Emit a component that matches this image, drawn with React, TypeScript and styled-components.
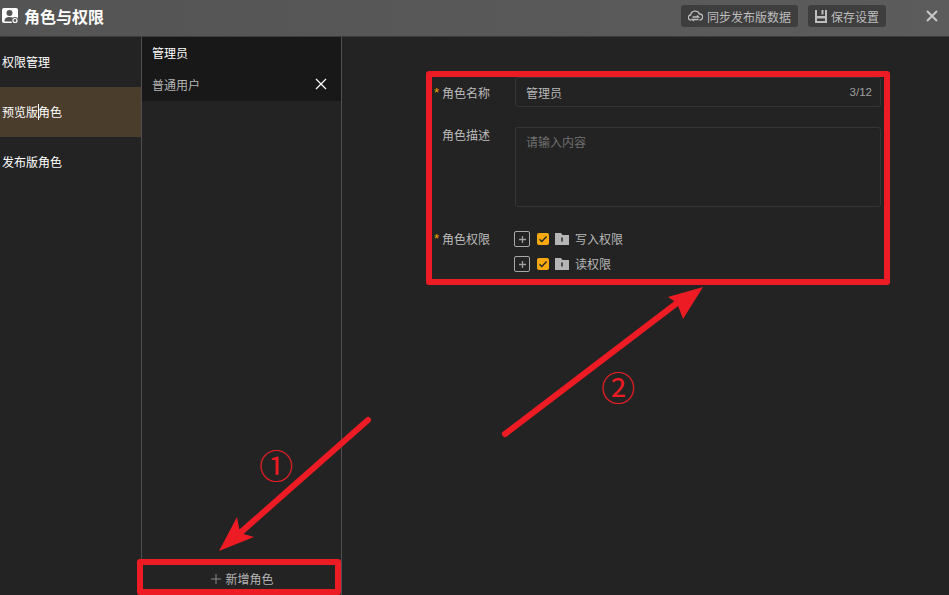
import React from "react";
import styled, { createGlobalStyle } from "styled-components";

const Global = createGlobalStyle`
  html, body { margin: 0; padding: 0; background: #232323; }
  * { box-sizing: border-box; }
`;

const Page = styled.div`
  position: relative;
  width: 949px;
  height: 595px;
  overflow: hidden;
  display: flex;
  flex-direction: column;
  background: #232323;
  color: #fff;
  font-family: "Noto Sans CJK SC", "Liberation Sans", sans-serif;
  font-size: 12px;
`;

const Header = styled.header`
  height: 37px;
  flex: none;
  display: flex;
  align-items: center;
  padding: 0 11px 4px 2px;
  background: linear-gradient(90deg, #545454, #5c5c5c);
  border-bottom: 1px solid #3c3c3c;
`;

const Title = styled.h1`
  margin: 0 0 0 5px;
  flex: 1;
  font-size: 16px;
  line-height: 22px;
  font-weight: 700;
  color: #fff;
`;

const HeaderButton = styled.div`
  height: 22px;
  display: flex;
  align-items: center;
  gap: 4px;
  margin-right: 10px;
  padding: 0 7px;
  border-radius: 3px;
  background: #3e3e3e;
  color: #bdbdbd;
  font-size: 12px;
`;

const CloseButton = styled.div`
  width: 12px;
  height: 12px;
  margin-left: 30px;
  display: flex;
  color: #c8c8c8;
`;

const Body = styled.main`
  flex: 1;
  min-height: 0;
  display: flex;
`;

const Sidebar = styled.nav`
  width: 141px;
  flex: none;
`;

const NavItem = styled.div<{ $active?: boolean }>`
  position: relative;
  height: 50px;
  padding: 0 2px 1px;
  display: flex;
  align-items: center;
  background: ${(p) => (p.$active ? "#4a3d2b" : "transparent")};
  color: #fff;
  font-size: 12px;
`;

const Caret = styled.span`
  position: absolute;
  left: 38px;
  top: 17px;
  width: 1px;
  height: 16px;
  background: #fff;
`;

const RoleColumn = styled.section`
  width: 201px;
  flex: none;
  display: flex;
  flex-direction: column;
  border-left: 1px solid #4f4f4f;
  border-right: 1px solid #4f4f4f;
`;

const RoleList = styled.div`
  background: #181818;
`;

const RoleRow = styled.div<{ $selected?: boolean }>`
  height: 32px;
  padding: 0 14px 2px 10px;
  display: flex;
  align-items: center;
  justify-content: space-between;
  color: ${(p) => (p.$selected ? "#fff" : "#b4b4b4")};
  font-size: 12px;
`;

const AddRole = styled.div`
  margin-top: auto;
  height: 30px;
  display: flex;
  align-items: center;
  justify-content: center;
  gap: 4px;
  color: #b4b4b4;
  font-size: 12px;
  padding: 0 0 3px 2px;
`;

const Content = styled.section`
  flex: 1;
  padding: 40px 68px 0 92px;
`;

const FormRow = styled.div<{ $gap?: number }>`
  display: grid;
  grid-template-columns: 81px 1fr;
  margin-bottom: ${(p) => p.$gap ?? 0}px;
`;

const Label = styled.label<{ $required?: boolean; $lineHeight?: number }>`
  position: relative;
  padding-left: 8px;
  color: #bcbcbc;
  font-size: 12px;
  line-height: ${(p) => p.$lineHeight ?? 30}px;
  &::before {
    content: ${(p) => (p.$required ? '"*"' : '""')};
    position: absolute;
    left: 0;
    top: 0;
    color: #f0a30a;
    font-family: "Liberation Sans", sans-serif;
    font-size: 13px;
  }
`;

const TextField = styled.div`
  height: 30px;
  padding: 0 8px 0 10px;
  display: flex;
  align-items: center;
  justify-content: space-between;
  border: 1px solid #353535;
  border-radius: 3px;
  color: #b8b8b8;
  font-size: 12px;
`;

const Counter = styled.span`
  color: #a0a0a0;
  font-size: 11.5px;
  font-family: "Liberation Sans", sans-serif;
`;

const TextArea = styled.div`
  height: 80px;
  padding: 4px 10px;
  border: 1px solid #353535;
  border-radius: 3px;
  color: #6f6f6f;
  font-size: 12px;
  line-height: 20px;
`;

const Tree = styled.div`
  display: flex;
  flex-direction: column;
  gap: 5px;
  padding-top: 5px;
`;

const TreeRow = styled.div`
  height: 20px;
  display: flex;
  align-items: center;
  color: #b8b8b8;
  font-size: 12px;
  margin-left: -1px;
  line-height: 18px;
`;

const Expander = styled.span`
  width: 16px;
  height: 16px;
  flex: none;
  display: flex;
  align-items: center;
  justify-content: center;
  border: 1px solid #a8a8a8;
  border-radius: 2px;
  margin-right: 7px;
`;

const Check = styled.span`
  width: 12px;
  height: 12px;
  flex: none;
  display: flex;
  border-radius: 2px;
  background: #f7a90f;
  margin-right: 6px;
`;

const FolderBox = styled.span`
  display: flex;
  flex: none;
  margin-right: 6px;
`;

const RedBox = styled.div<{ $x: number; $y: number; $w: number; $h: number }>`
  position: absolute;
  left: ${(p) => p.$x}px;
  top: ${(p) => p.$y}px;
  width: ${(p) => p.$w}px;
  height: ${(p) => p.$h}px;
  border: 6px solid #ed1c24;
  border-radius: 3px;
  pointer-events: none;
`;

const ArrowLayer = styled.svg`
  position: absolute;
  left: 0;
  top: 0;
  pointer-events: none;
`;

const Marker = styled.span<{ $x: number; $y: number }>`
  position: absolute;
  left: ${(p) => p.$x}px;
  top: ${(p) => p.$y}px;
  width: 40px;
  height: 40px;
  display: flex;
  align-items: center;
  justify-content: center;
  color: #ed1c24;
  font-family: "Noto Sans CJK SC", sans-serif;
  font-size: 34px;
  line-height: 40px;
`;

const UserIcon = () => (
  <svg width="17" height="16" viewBox="0 0 17 16">
    <rect x="0" y="0" width="16" height="15" rx="2" fill="#fff" />
    <circle cx="7.5" cy="5" r="3" fill="#555" />
    <path d="M2.5 13.5c0-3.5 2-4.5 5-4.5s4 1 4.5 2l-1 2.5z" fill="#555" />
    <circle cx="13" cy="12.5" r="3.6" fill="#555" />
    <circle cx="13" cy="12.5" r="2" fill="none" stroke="#fff" strokeWidth="1.2" />
  </svg>
);

const CloudIcon = () => (
  <svg width="15" height="14" viewBox="0 0 15 14" fill="none" stroke="#bdbdbd" strokeWidth="1.4">
    <path d="M3.5 11H3a2.5 2.5 0 0 1-.4-5A4.6 4.6 0 0 1 11.4 5 3 3 0 0 1 12 11h-.5" />
    <path d="M4.5 8h6l-1.5-1.5M10.5 10.5h-6L6 12" />
  </svg>
);

const SaveIcon = () => (
  <svg width="12" height="13" viewBox="0 0 12 13" fill="#bdbdbd">
    <path d="M0 0h2v6h8V0h2v13H0zM2 8.5V11h8V8.5z" fillRule="evenodd" />
    <rect x="6.5" y="0" width="2" height="4.5" />
  </svg>
);

const CrossIcon = ({ size, stroke, color }: { size: number; stroke: number; color: string }) => (
  <svg width={size} height={size} viewBox="0 0 12 12" fill="none" stroke={color} strokeWidth={stroke}>
    <path d="M1 1l10 10M11 1L1 11" />
  </svg>
);

const PlusIcon = ({ size, color, stroke = 1 }: { size: number; color: string; stroke?: number }) => (
  <svg width={size} height={size} viewBox="0 0 10 10" fill="none" stroke={color} strokeWidth={stroke}>
    <path d="M5 0v10M0 5h10" />
  </svg>
);

const TickIcon = () => (
  <svg width="12" height="12" viewBox="0 0 12 12" fill="none" stroke="#232323" strokeWidth="1.3">
    <path d="M2.5 6.3l2.3 2.2 4.8-5" />
  </svg>
);

const FolderIcon = () => (
  <svg width="14" height="12" viewBox="0 0 14 12">
    <path d="M0 0h6l1.5 2H14v10H0z" fill="#b5b5b5" />
    <rect x="6" y="4.5" width="2" height="4" fill="#4a4a4a" />
  </svg>
);

function PermissionRow({ name }: { name: string }) {
  return (
    <TreeRow>
      <Expander>
        <PlusIcon size={7} color="#a0a0a0" stroke={1.8} />
      </Expander>
      <Check>
        <TickIcon />
      </Check>
      <FolderBox>
        <FolderIcon />
      </FolderBox>
      {name}
    </TreeRow>
  );
}

export default function App() {
  return (
    <Page>
      <Global />
      <Header>
        <UserIcon />
        <Title>角色与权限</Title>
        <HeaderButton>
          <CloudIcon />
          同步发布版数据
        </HeaderButton>
        <HeaderButton>
          <SaveIcon />
          保存设置
        </HeaderButton>
        <CloseButton>
          <CrossIcon size={12} stroke={2} color="#c8c8c8" />
        </CloseButton>
      </Header>
      <Body>
        <Sidebar>
          <NavItem>权限管理</NavItem>
          <NavItem $active>
            预览版角色
            <Caret />
          </NavItem>
          <NavItem>发布版角色</NavItem>
        </Sidebar>
        <RoleColumn>
          <RoleList>
            <RoleRow $selected>管理员</RoleRow>
            <RoleRow>
              普通用户
              <CrossIcon size={12} stroke={1.2} color="#fff" />
            </RoleRow>
          </RoleList>
          <AddRole>
            <PlusIcon size={10} color="#8a8a8a" />
            新增角色
          </AddRole>
        </RoleColumn>
        <Content>
          <FormRow $gap={19}>
            <Label $required $lineHeight={31}>角色名称</Label>
            <TextField>
              管理员
              <Counter>3/12</Counter>
            </TextField>
          </FormRow>
          <FormRow $gap={17}>
            <Label $lineHeight={16}>角色描述</Label>
            <TextArea>请输入内容</TextArea>
          </FormRow>
          <FormRow>
            <Label $required>角色权限</Label>
            <Tree>
              <PermissionRow name="写入权限" />
              <PermissionRow name="读权限" />
            </Tree>
          </FormRow>
        </Content>
      </Body>

      <RedBox $x={426} $y={71} $w={464} $h={214} />
      <RedBox $x={137} $y={559} $w={204} $h={36} />
      <ArrowLayer width="949" height="595" viewBox="0 0 949 595">
        <g stroke="#ed1c24" strokeWidth="6" strokeLinecap="round" fill="none">
          <path d="M368 420L240 533" />
          <path d="M505 434L677 303" />
        </g>
        <path d="M219 551L237 517L240 533L254 537z" fill="#ed1c24" />
        <path d="M703 287L668 297L677 303L683 319z" fill="#ed1c24" />
      </ArrowLayer>
      <Marker $x={256} $y={445}>①</Marker>
      <Marker $x={598} $y={367}>②</Marker>
    </Page>
  );
}
